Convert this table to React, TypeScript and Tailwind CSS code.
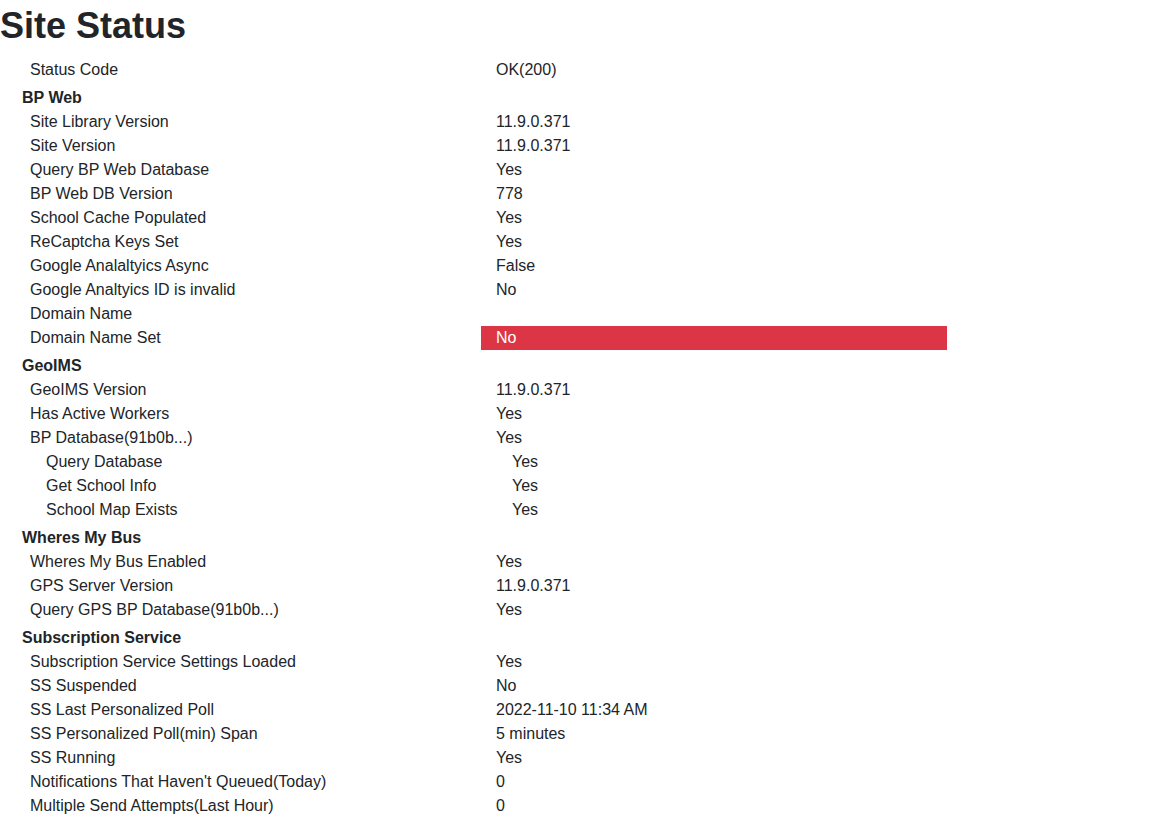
type Row = { label: string; value: string; nested?: boolean; danger?: boolean }
type Section = { title?: string; rows: Row[] }

const sections: Section[] = [
  { rows: [{ label: "Status Code", value: "OK(200)" }] },
  {
    title: "BP Web",
    rows: [
      { label: "Site Library Version", value: "11.9.0.371" },
      { label: "Site Version", value: "11.9.0.371" },
      { label: "Query BP Web Database", value: "Yes" },
      { label: "BP Web DB Version", value: "778" },
      { label: "School Cache Populated", value: "Yes" },
      { label: "ReCaptcha Keys Set", value: "Yes" },
      { label: "Google Analaltyics Async", value: "False" },
      { label: "Google Analtyics ID is invalid", value: "No" },
      { label: "Domain Name", value: "" },
      { label: "Domain Name Set", value: "No", danger: true },
    ],
  },
  {
    title: "GeoIMS",
    rows: [
      { label: "GeoIMS Version", value: "11.9.0.371" },
      { label: "Has Active Workers", value: "Yes" },
      { label: "BP Database(91b0b...)", value: "Yes" },
      { label: "Query Database", value: "Yes", nested: true },
      { label: "Get School Info", value: "Yes", nested: true },
      { label: "School Map Exists", value: "Yes", nested: true },
    ],
  },
  {
    title: "Wheres My Bus",
    rows: [
      { label: "Wheres My Bus Enabled", value: "Yes" },
      { label: "GPS Server Version", value: "11.9.0.371" },
      { label: "Query GPS BP Database(91b0b...)", value: "Yes" },
    ],
  },
  {
    title: "Subscription Service",
    rows: [
      { label: "Subscription Service Settings Loaded", value: "Yes" },
      { label: "SS Suspended", value: "No" },
      { label: "SS Last Personalized Poll", value: "2022-11-10 11:34 AM" },
      { label: "SS Personalized Poll(min) Span", value: "5 minutes" },
      { label: "SS Running", value: "Yes" },
      { label: "Notifications That Haven't Queued(Today)", value: "0" },
      { label: "Multiple Send Attempts(Last Hour)", value: "0" },
    ],
  },
]

export default function App() {
  return (
    <div className="min-h-screen bg-white font-['Segoe_UI','Liberation_Sans',sans-serif] text-[16px] leading-6 text-[#212529]">
      <h1 className="mb-2 pt-[2px] text-[36px] leading-[47px] font-bold">Site Status</h1>
      <div className="pt-px">
        {sections.map((s, i) => (
          <div key={i}>
            {s.title && <div className="mt-1 pl-[22px] font-bold">{s.title}</div>}
            {s.rows.map((r) => (
              <div key={r.label} className="grid grid-cols-[481px_466px]">
                <div className={r.nested ? "pl-[46px]" : "pl-[30px]"}>{r.label}</div>
                <div
                  className={
                    (r.nested ? "pl-[31px] " : "pl-[15px] ") +
                    (r.danger ? "bg-[#dc3545] text-white" : "")
                  }
                >
                  {r.value || "\u00a0"}
                </div>
              </div>
            ))}
          </div>
        ))}
      </div>
    </div>
  )
}
